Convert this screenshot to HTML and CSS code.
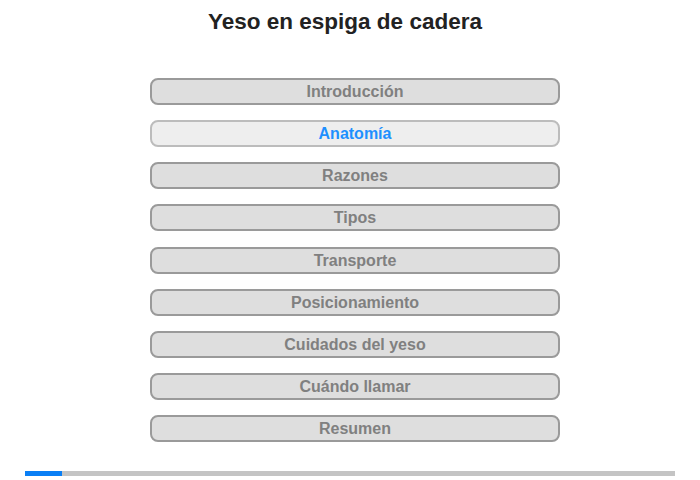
FILE: index.html
```html
<!DOCTYPE html>
<html lang="es">
<head>
<meta charset="utf-8">
<title>Yeso en espiga de cadera</title>
<link rel="stylesheet" href="styles.css">
</head>
<body>
<h1 class="title">Yeso en espiga de cadera</h1>
<nav class="menu">
  <div class="item">Introducción</div>
  <div class="item active">Anatomía</div>
  <div class="item">Razones</div>
  <div class="item">Tipos</div>
  <div class="item">Transporte</div>
  <div class="item">Posicionamiento</div>
  <div class="item">Cuidados del yeso</div>
  <div class="item">Cuándo llamar</div>
  <div class="item">Resumen</div>
</nav>
<div class="progress"><div class="progress-fill" style="width:37px"></div></div>
</body>
</html>
```
FILE: styles.css
```css
html, body {
  margin: 0;
  padding: 0;
  background: #ffffff;
  font-family: "Liberation Sans", Arial, sans-serif;
}
.title {
  margin: 0;
  padding-top: 8px;
  height: 78px;
  box-sizing: border-box;
  font-size: 22.5px;
  line-height: 28px;
  font-weight: bold;
  color: #222222;
  text-align: center;
  padding-right: 10px;
}
.menu {
  display: flex;
  flex-direction: column;
  gap: 15.125px;
  margin-left: 150px;
  width: 410px;
}
.item {
  box-sizing: border-box;
  height: 27px;
  border: 2px solid #9a9a9a;
  border-radius: 8px;
  background: #dedede;
  color: #808080;
  font-weight: bold;
  font-size: 16px;
  line-height: 23px;
  text-align: center;
}
.item.active {
  background: #eeeeee;
  border-color: #bcbcbc;
  color: #1e90ff;
}
.progress {
  margin: 29px 0 0 25px;
  width: 650px;
  height: 5px;
  background: #c4c4c4;
}
.progress-fill {
  height: 100%;
  background: #0a7ff5;
}
```
